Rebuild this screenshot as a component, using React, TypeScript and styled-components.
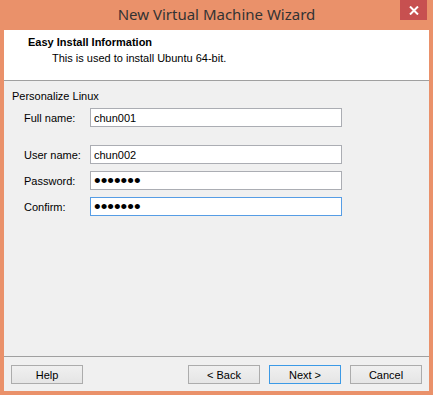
import styled, { createGlobalStyle } from "styled-components";

const GlobalStyle = createGlobalStyle`
    html, body {
        margin: 0;
        padding: 0;
        background: #ea916a;
    }
    body {
        font-family: "Liberation Sans", Arial, sans-serif;
        font-size: 11px;
        color: #000;
    }
`;

const Window = styled.div`
    width: 433px;
    height: 395px;
    background: #ea916a;
    display: flex;
    flex-direction: column;
    box-sizing: border-box;
    padding: 0 4px 4px 4px;
    position: relative;
`;

const TitleBar = styled.div`
    height: 30px;
    display: flex;
    align-items: center;
    justify-content: center;
    font-family: "Noto Sans", "Open Sans", sans-serif;
    font-size: 15px;
    color: #333;
    padding-bottom: 3px;
    box-sizing: border-box;
`;

const CloseButton = styled.div`
    position: absolute;
    top: 0;
    right: 6px;
    width: 27px;
    height: 20px;
    background: #c75050;
    display: flex;
    align-items: center;
    justify-content: center;
`;

const Client = styled.div`
    flex: 1;
    display: flex;
    flex-direction: column;
    background: #f0f0f0;
`;

const Header = styled.div`
    height: 51px;
    box-sizing: border-box;
    background: #fff;
    border-bottom: 1px solid #a0a0a0;
    padding: 6px 0 0 24px;
    display: flex;
    flex-direction: column;
    gap: 4px;
`;

const HeaderTitle = styled.div`
    font-weight: bold;
    font-size: 11px;
`;

const HeaderSub = styled.div`
    padding-left: 24px;
`;

const Body = styled.div`
    flex: 1;
    padding: 8px 0 0 8px;
`;

const GroupLabel = styled.div`
    height: 14px;
    line-height: 14px;
    margin-bottom: 5px;
`;

const Row = styled.div<{ $gap: number }>`
    display: flex;
    align-items: center;
    margin-top: ${(p) => p.$gap}px;
`;

const Label = styled.div`
    width: 78px;
    box-sizing: border-box;
    padding-left: 12px;
`;

const Field = styled.input<{ $focused?: boolean }>`
    width: 252px;
    height: 19px;
    box-sizing: border-box;
    border: 1px solid ${(p) => (p.$focused ? "#569de5" : "#abadb3")};
    background: #fff;
    font-family: "Liberation Sans", Arial, sans-serif;
    font-size: ${(p) => (p.type === "password" ? "19px" : "11px")};
    line-height: 17px;
    padding: 0 3px;
    margin: 0;
    outline: none;
    color: #000;
`;

const Footer = styled.div`
    border-top: 1px solid #a0a0a0;
    padding: 8px 7px 7px 7px;
    display: flex;
    gap: 9px;
`;

const Button = styled.div<{ $default?: boolean }>`
    width: 72px;
    height: 19px;
    box-sizing: border-box;
    border: 1px solid ${(p) => (p.$default ? "#3c9ae6" : "#acacac")};
    background: linear-gradient(#f0f0f0, #e5e5e5);
    display: flex;
    align-items: center;
    justify-content: center;
`;

const Spacer = styled.div`
    flex: 1;
`;

export default function App() {
    return (
        <>
            <GlobalStyle />
            <Window>
                <TitleBar>New Virtual Machine Wizard</TitleBar>
                <CloseButton>
                    <svg width="10" height="9" viewBox="0 0 10 9">
                        <path d="M1 0.5 L9 8.5 M9 0.5 L1 8.5" stroke="#fff" strokeWidth="2" />
                    </svg>
                </CloseButton>
                <Client>
                    <Header>
                        <HeaderTitle>Easy Install Information</HeaderTitle>
                        <HeaderSub>This is used to install Ubuntu 64-bit.</HeaderSub>
                    </Header>
                    <Body>
                        <GroupLabel>Personalize Linux</GroupLabel>
                        <Row $gap={0}>
                            <Label>Full name:</Label>
                            <Field readOnly defaultValue="chun001" />
                        </Row>
                        <Row $gap={18}>
                            <Label>User name:</Label>
                            <Field readOnly defaultValue="chun002" />
                        </Row>
                        <Row $gap={7}>
                            <Label>Password:</Label>
                            <Field type="password" readOnly defaultValue="1234567" />
                        </Row>
                        <Row $gap={7}>
                            <Label>Confirm:</Label>
                            <Field type="password" readOnly defaultValue="1234567" $focused />
                        </Row>
                    </Body>
                    <Footer>
                        <Button>Help</Button>
                        <Spacer />
                        <Button>&lt; Back</Button>
                        <Button $default>Next &gt;</Button>
                        <Button>Cancel</Button>
                    </Footer>
                </Client>
            </Window>
        </>
    );
}
